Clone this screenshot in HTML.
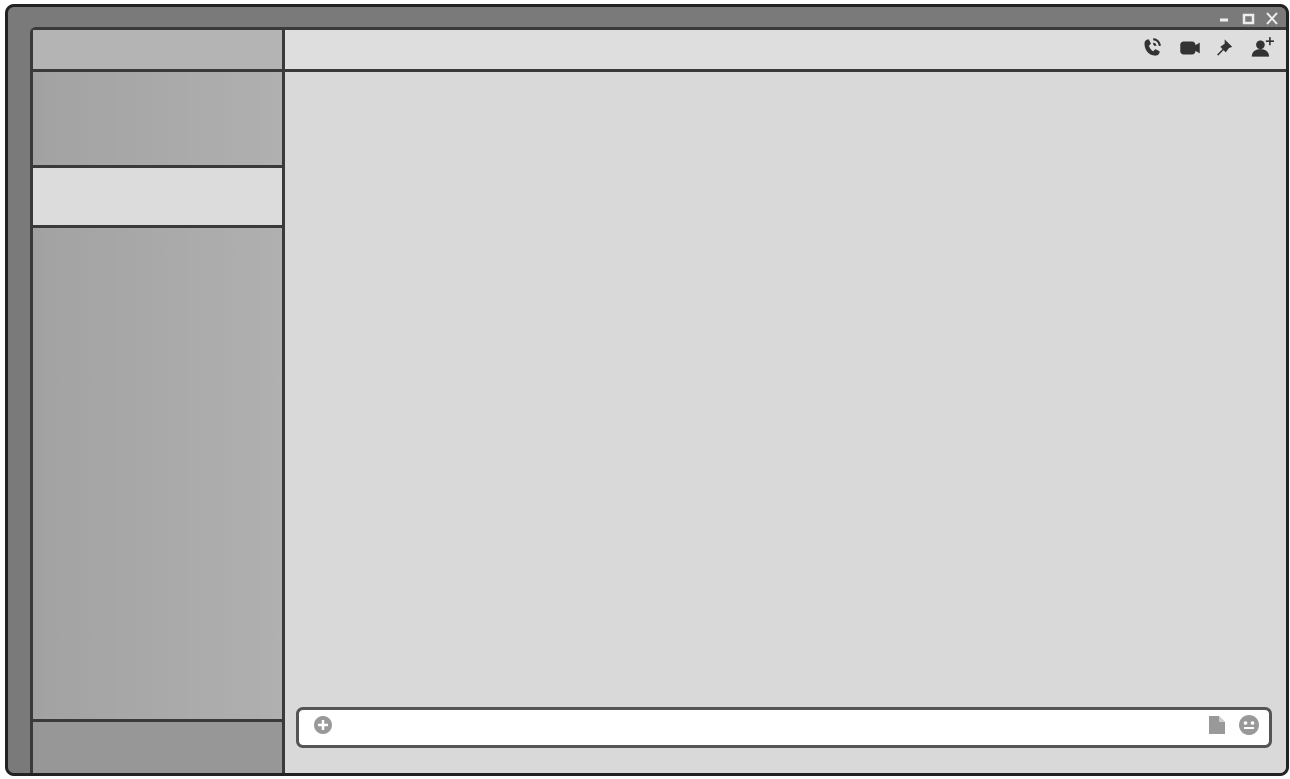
<!DOCTYPE html><html><head><style>
body{margin:0;width:1290px;height:779px;background:#fff;overflow:hidden;font-family:"Liberation Sans",sans-serif}
.frame{position:absolute;left:5px;top:4px;width:1278px;height:766px;border:3px solid #222;border-radius:9px;background:#7a7a7a;overflow:hidden}
.side{position:absolute;left:22px;top:20px;width:252px;height:746px;background:linear-gradient(90deg,#a2a2a2,#b0b0b0);border-left:3px solid #3a3a3a;border-top:3px solid #3a3a3a;border-radius:6px 0 0 0}
.main{position:absolute;left:274px;top:20px;width:1001px;height:746px;background:#d9d9d9;border-left:3px solid #3a3a3a;border-top:3px solid #3a3a3a}
.hl{position:absolute;left:0;right:0;height:3px;background:#3a3a3a}
</style></head><body>
<div class="frame">
<div class="side">
<div style="position:absolute;left:0;right:0;top:0;height:39px;background:#b4b4b4"></div>
<div class="hl" style="top:39px"></div>
<div class="hl" style="top:135px"></div>
<div style="position:absolute;left:0;right:0;top:138px;height:57px;background:#dcdcdc"></div>
<div class="hl" style="top:195px"></div>
<div class="hl" style="top:689px"></div>
<div style="position:absolute;left:0;right:0;top:692px;height:60px;background:#979797"></div>
</div>
<div class="main">
<div style="position:absolute;left:0;right:0;top:0;height:39px;background:#dedede"></div>
<div class="hl" style="top:39px"></div>
<svg style="position:absolute;left:855px;top:5px" width="152" height="26" viewBox="0 0 140 24">
<g fill="#333">
<path d="M4 8c0-3 2-4 4-4l2 4-2 2c1 2 2 4 4 5l2-2 4 2c0 3-2 4-4 4C8 19 4 14 4 8z"/>
<path d="M12 3a7 7 0 0 1 7 7h-2a5 5 0 0 0-5-5z M12 7a3 3 0 0 1 3 3h-2a1 1 0 0 0-1-1z"/>
<rect x="37" y="6" width="14" height="12" rx="3"/><path d="M50 10l5-3v10l-5-3z"/>
<path d="M78 4l7 7-3 1-3 4-2-2-5 5-1-1 5-5-2-2 4-3z"/>
<circle cx="111" cy="9" r="4"/><path d="M103 20c0-5 4-7 8-7s8 2 8 7z"/>
<path d="M119 2h1.5v3h3v1.5h-3v3H119v-3h-3V5h3z"/>
</g></svg>
<div style="position:absolute;left:11px;top:677px;width:970px;height:35px;background:#fff;border:3px solid #555;border-radius:7px"></div>
<svg style="position:absolute;left:28px;top:685px" width="20" height="20"><circle cx="10" cy="10" r="9" fill="#999"/><path d="M10 5v10M5 10h10" stroke="#fff" stroke-width="2.5"/></svg>
<svg style="position:absolute;left:922px;top:683px" width="60" height="24"><path d="M2 3h10l6 6v12H2z" fill="#999"/><path d="M12 3v6h6" fill="#ccc"/><circle cx="42" cy="12" r="10" fill="#999"/><circle cx="38.5" cy="10" r="1.8" fill="#fff"/><circle cx="45.5" cy="10" r="1.8" fill="#fff"/><path d="M37 15h10" stroke="#fff" stroke-width="2"/></svg>
</div>
<svg style="position:absolute;left:1208px;top:4px" width="70" height="16"><path d="M4 9h8" stroke="#eee" stroke-width="3"/><rect x="28" y="4" width="9" height="8" fill="none" stroke="#eee" stroke-width="2.5"/><path d="M51 2l10 11M61 2l-10 11" stroke="#eee" stroke-width="2"/></svg>
</div>
</body></html>
